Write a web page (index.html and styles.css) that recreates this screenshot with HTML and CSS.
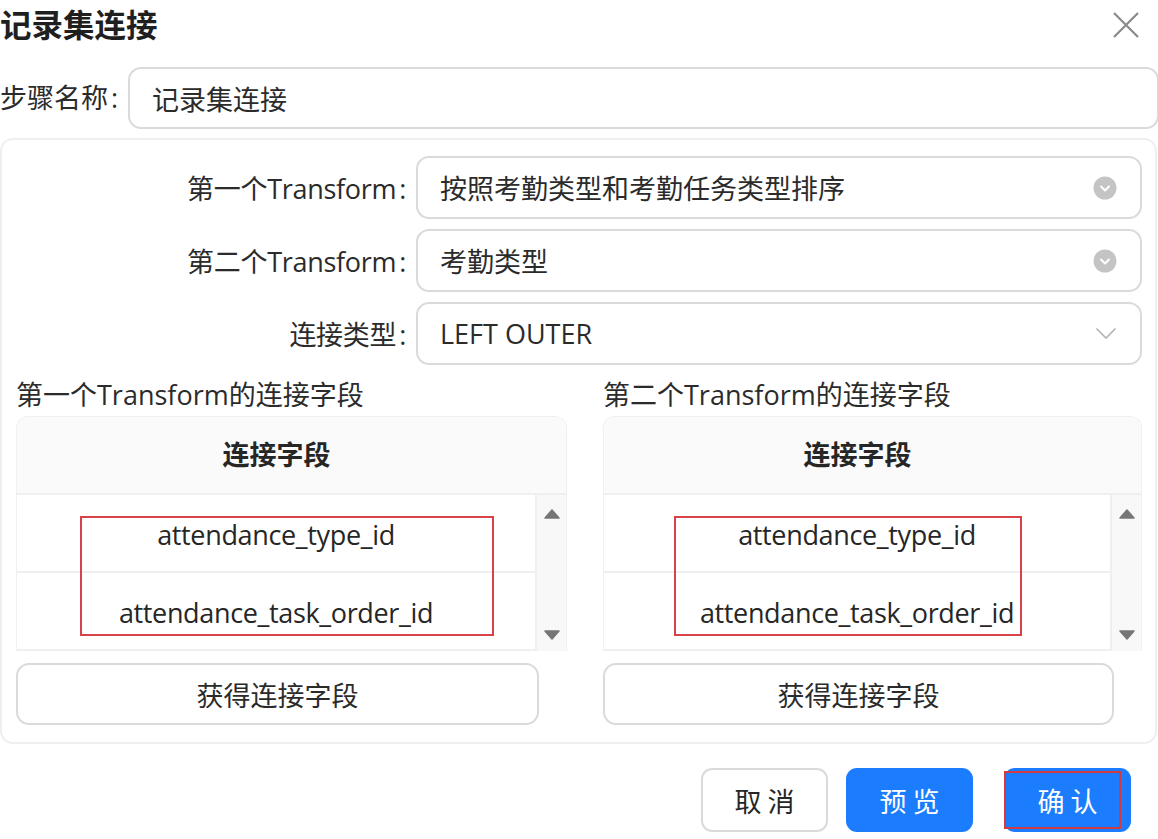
FILE: index.html
```html
<!DOCTYPE html>
<html lang="zh-CN">
<head>
<meta charset="utf-8">
<title>记录集连接</title>
<link rel="stylesheet" href="styles.css">
</head>
<body>
<div class="dialog">
  <div class="title-bar">
    <div class="title">记录集连接</div>
    <svg class="close" width="28" height="28" viewBox="0 0 28 28"><path d="M2 2 L26 26 M26 2 L2 26" stroke="#8a8a8a" stroke-width="2.2" fill="none"/></svg>
  </div>

  <div class="step-row">
    <label class="step-label">步骤名称<span class="colon">:</span></label>
    <div class="input">记录集连接</div>
  </div>

  <div class="panel">
    <div class="form-row">
      <label class="form-label">第一个Transform<span class="colon">:</span></label>
      <div class="select">
        <span>按照考勤类型和考勤任务类型排序</span>
        <svg class="icon-circle" width="24" height="24" viewBox="0 0 24 24"><circle cx="12" cy="12" r="11.5" fill="#c4c4c4"/><path d="M8 10.5 L12 14.5 L16 10.5" stroke="#fff" stroke-width="2" fill="none" stroke-linecap="round" stroke-linejoin="round"/></svg>
      </div>
    </div>
    <div class="form-row">
      <label class="form-label">第二个Transform<span class="colon">:</span></label>
      <div class="select">
        <span>考勤类型</span>
        <svg class="icon-circle" width="24" height="24" viewBox="0 0 24 24"><circle cx="12" cy="12" r="11.5" fill="#c4c4c4"/><path d="M8 10.5 L12 14.5 L16 10.5" stroke="#fff" stroke-width="2" fill="none" stroke-linecap="round" stroke-linejoin="round"/></svg>
      </div>
    </div>
    <div class="form-row">
      <label class="form-label">连接类型<span class="colon">:</span></label>
      <div class="select">
        <span>LEFT OUTER</span>
        <svg class="icon-chevron" width="22" height="13" viewBox="0 0 22 13"><path d="M1.5 1.5 L11 11 L20.5 1.5" stroke="#b3b3b3" stroke-width="1.6" fill="none"/></svg>
      </div>
    </div>

    <div class="fields">
      <div class="field-col col-left">
        <div class="field-title">第一个Transform的连接字段</div>
        <div class="table">
          <div class="thead">
            <div class="th">连接字段</div>
            <div class="gutter-head"></div>
          </div>
          <div class="tbody">
            <div class="rows">
              <div class="td">attendance_type_id</div>
              <div class="td">attendance_task_order_id</div>
            </div>
            <div class="scrollbar">
              <svg width="16" height="10" viewBox="0 0 16 10"><path d="M8 1 L15 9 L1 9 Z" fill="#767676" stroke="#767676" stroke-width="1.5" stroke-linejoin="round"/></svg>
              <svg width="16" height="10" viewBox="0 0 16 10"><path d="M1 1 L15 1 L8 9 Z" fill="#767676" stroke="#767676" stroke-width="1.5" stroke-linejoin="round"/></svg>
            </div>
          </div>
          <div class="mark mark-left"></div>
        </div>
        <button class="btn-get">获得连接字段</button>
      </div>

      <div class="field-col col-right">
        <div class="field-title">第二个Transform的连接字段</div>
        <div class="table">
          <div class="thead">
            <div class="th">连接字段</div>
            <div class="gutter-head"></div>
          </div>
          <div class="tbody">
            <div class="rows">
              <div class="td">attendance_type_id</div>
              <div class="td">attendance_task_order_id</div>
            </div>
            <div class="scrollbar">
              <svg width="16" height="10" viewBox="0 0 16 10"><path d="M8 1 L15 9 L1 9 Z" fill="#767676" stroke="#767676" stroke-width="1.5" stroke-linejoin="round"/></svg>
              <svg width="16" height="10" viewBox="0 0 16 10"><path d="M1 1 L15 1 L8 9 Z" fill="#767676" stroke="#767676" stroke-width="1.5" stroke-linejoin="round"/></svg>
            </div>
          </div>
          <div class="mark mark-right"></div>
        </div>
        <button class="btn-get">获得连接字段</button>
      </div>
    </div>
  </div>

  <div class="footer">
    <button class="btn btn-cancel">取 消</button>
    <button class="btn btn-primary btn-preview">预 览</button>
    <button class="btn btn-primary btn-confirm">确 认<span class="mark mark-confirm"></span></button>
  </div>
</div>
</body>
</html>
```

FILE: styles.css
```css
* { box-sizing: border-box; }

html, body {
  margin: 0;
  padding: 0;
  background: #ffffff;
}

body {
  width: 1158px;
  height: 839px;
  overflow: hidden;
  font-family: "Open Sans", "Noto Sans CJK SC", sans-serif;
  font-size: 27px;
  color: #2b2b2b;
}

.dialog {
  width: 1158px;
}

.title-bar {
  height: 46px;
  display: flex;
  align-items: center;
  justify-content: space-between;
  padding-right: 18px;
}

.title {
  font-family: "Noto Sans CJK SC", sans-serif;
  font-weight: 700;
  font-size: 31.5px;
  color: #1f1f1f;
  line-height: 46px;
}

.close {
  margin-top: 4px;
}

.colon {
  margin-left: 3px;
}

.step-row {
  margin-top: 21px;
  display: flex;
  align-items: center;
}

.step-label {
  width: 128px;
  flex: none;
  line-height: 62px;
  white-space: nowrap;
}

.input {
  flex: 1;
  height: 62px;
  border: 2px solid #dadada;
  border-radius: 13px;
  padding-left: 22px;
  display: flex;
  align-items: center;
  margin-right: -1px;
}

.panel {
  margin-top: 9px;
  width: 1157px;
  border: 2px solid #efefef;
  border-radius: 13px;
  padding: 16px 13px 17px 14px;
}

.form-row {
  display: flex;
  align-items: center;
  margin-bottom: 10px;
}

.form-row:last-of-type {
  margin-bottom: 0;
}

.form-label {
  width: 400px;
  flex: none;
  text-align: right;
  padding-right: 10px;
  white-space: nowrap;
  letter-spacing: -0.3px;
}

.select {
  flex: 1;
  height: 63px;
  border: 2px solid #dadada;
  border-radius: 13px;
  padding: 0 22px 0 22px;
  display: flex;
  align-items: center;
  justify-content: space-between;
}

.icon-circle {
  margin-right: 1px;
}

.icon-chevron {
  margin-right: 1px;
}

.fields {
  margin-top: 12px;
  display: flex;
  gap: 36px;
}

.col-left { width: 551px; }
.col-right { width: 539px; }

.field-title {
  height: 36px;
  line-height: 36px;
  margin-bottom: 3px;
  white-space: nowrap;
}

.table {
  position: relative;
  border: 1px solid #f0f0f0;
  border-bottom: none;
  border-radius: 12px 12px 0 0;
}

.thead {
  display: flex;
  height: 78px;
  background: #fafafa;
  border-radius: 12px 12px 0 0;
  border-bottom: 2px solid #efefef;
}

.th {
  flex: 1;
  display: flex;
  align-items: center;
  justify-content: center;
  padding-bottom: 3px;
  font-family: "Noto Sans CJK SC", sans-serif;
  font-weight: 700;
  color: #262626;
}

.gutter-head {
  width: 30px;
  flex: none;
}

.tbody {
  display: flex;
}

.rows {
  flex: 1;
  border-right: 2px solid #efefef;
}

.td {
  height: 78px;
  display: flex;
  align-items: center;
  justify-content: center;
  border-bottom: 2px solid #efefef;
  color: #262626;
  letter-spacing: -0.35px;
  padding-top: 2px;
}

.scrollbar {
  width: 29px;
  flex: none;
  background: #f8f8f8;
  display: flex;
  flex-direction: column;
  align-items: center;
  justify-content: space-between;
  padding: 14px 0 11px;
}

.mark {
  position: absolute;
  border: 2px solid #d8434a;
  pointer-events: none;
}

.mark-left {
  left: 63px;
  top: 99px;
  width: 414px;
  height: 120px;
}

.mark-right {
  left: 70px;
  top: 99px;
  width: 348px;
  height: 120px;
}

.btn-get {
  display: block;
  margin-top: 12px;
  width: calc(100% - 28px);
  height: 62px;
  border: 2px solid #dadada;
  border-radius: 13px;
  background: #ffffff;
  font-family: "Open Sans", "Noto Sans CJK SC", sans-serif;
  font-size: 27px;
  color: #2b2b2b;
}

.footer {
  margin-top: 24px;
  display: flex;
  justify-content: flex-end;
  padding-right: 27px;
}

.btn {
  position: relative;
  width: 127px;
  height: 64px;
  border-radius: 11px;
  font-family: "Noto Sans CJK SC", sans-serif;
  font-size: 27px;
  padding: 0;
}

.btn-cancel {
  background: #ffffff;
  border: 2px solid #dadada;
  color: #262626;
}

.btn-primary {
  background: #1b7cfe;
  border: none;
  color: #ffffff;
}

.btn-preview {
  margin-left: 18px;
}

.btn-confirm {
  margin-left: 31px;
}

.mark-confirm {
  left: 0;
  top: 3px;
  width: 117px;
  height: 58px;
  border-color: #d33a3f;
}
```
